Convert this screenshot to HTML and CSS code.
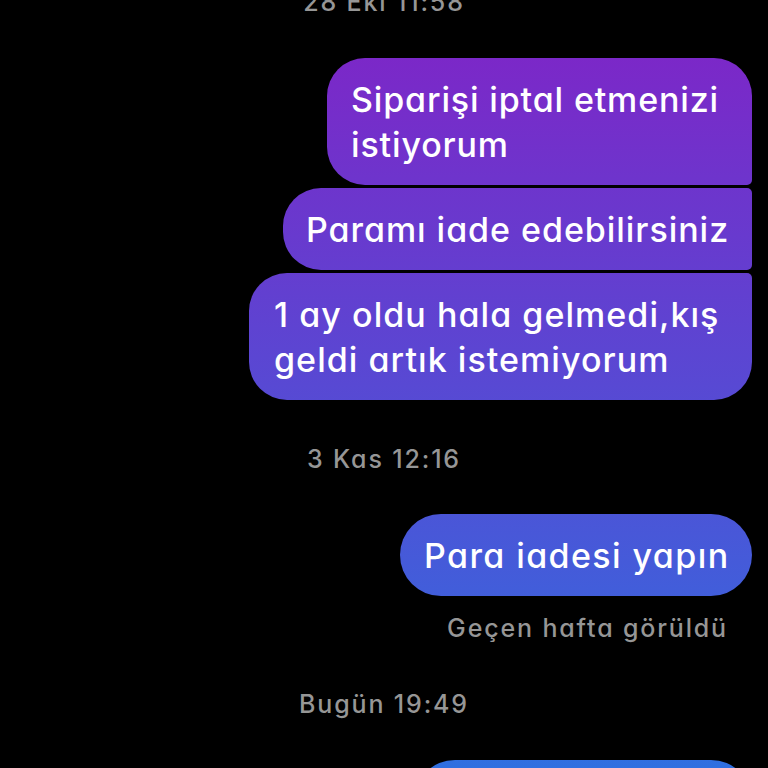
FILE: index.html
```html
<!DOCTYPE html>
<html lang="tr">
<head>
<meta charset="utf-8">
<title>Mesajlar</title>
<link rel="stylesheet" href="styles.css">
</head>
<body>
<main class="thread">
  <p class="stamp stamp-first">28 Eki 11:58</p>
  <div class="group">
    <div class="bubble b-first w-1">Siparişi iptal etmenizi<br>istiyorum</div>
    <div class="bubble b-middle w-2">Paramı iade edebilirsiniz</div>
    <div class="bubble b-last w-3">1 ay oldu hala gelmedi,kış<br>geldi artık istemiyorum</div>
  </div>
  <p class="stamp stamp-kas">3 Kas 12:16</p>
  <div class="group">
    <div class="bubble b-single w-4">Para iadesi yapın</div>
    <p class="seen">Geçen hafta görüldü</p>
  </div>
  <p class="stamp stamp-bugun">Bugün 19:49</p>
  <div class="group">
    <div class="bubble b-single w-5">&nbsp;</div>
  </div>
</main>
</body>
</html>
```
FILE: styles.css
```css
* { box-sizing: border-box; }
html, body { margin: 0; height: 100%; background: #000; overflow: hidden; }
body { font-family: Inter, "Noto Sans", sans-serif; font-feature-settings: "cv11" 1; }
.thread { display: flex; flex-direction: column; height: 768px; overflow: hidden; padding: 0 16px; }
.stamp { margin: 0; text-align: center; color: #969696; font-size: 25px; line-height: 32px; font-weight: 500; letter-spacing: 1.85px; }
.stamp-first { margin-top: -14px; margin-bottom: 40px; }
.stamp-kas { margin-top: 43px; margin-bottom: 39px; }
.stamp-bugun { margin-top: 44px; margin-bottom: 40px; }
.group { display: flex; flex-direction: column; align-items: flex-end; gap: 3px; flex-shrink: 0; }
.bubble {
  color: #fff; font-size: 34px; line-height: 45px; font-weight: 500; letter-spacing: 0.95px;
  padding: 19px 0 18px 24px; white-space: nowrap;
  background: linear-gradient(180deg, #7b28c8 58px, #2f6fe0 768px) fixed;
}
.b-first { border-radius: 38px 38px 5px 38px; }
.b-middle { border-radius: 38px 5px 5px 38px; }
.b-last { border-radius: 38px 5px 38px 38px; }
.b-single { border-radius: 41px; }
.w-1 { width: 425px; letter-spacing: 0.85px; }
.w-2 { width: 469px; padding-left: 23px; }
.w-3 { width: 503px; padding-left: 25px; letter-spacing: 1.05px; }
.w-4 { width: 352px; letter-spacing: 1.4px; }
.w-5 { width: 338px; }
.seen { margin: 13px 24px 0 0; color: #969696; font-size: 25px; line-height: 32px; font-weight: 500; letter-spacing: 1.85px; }
```
